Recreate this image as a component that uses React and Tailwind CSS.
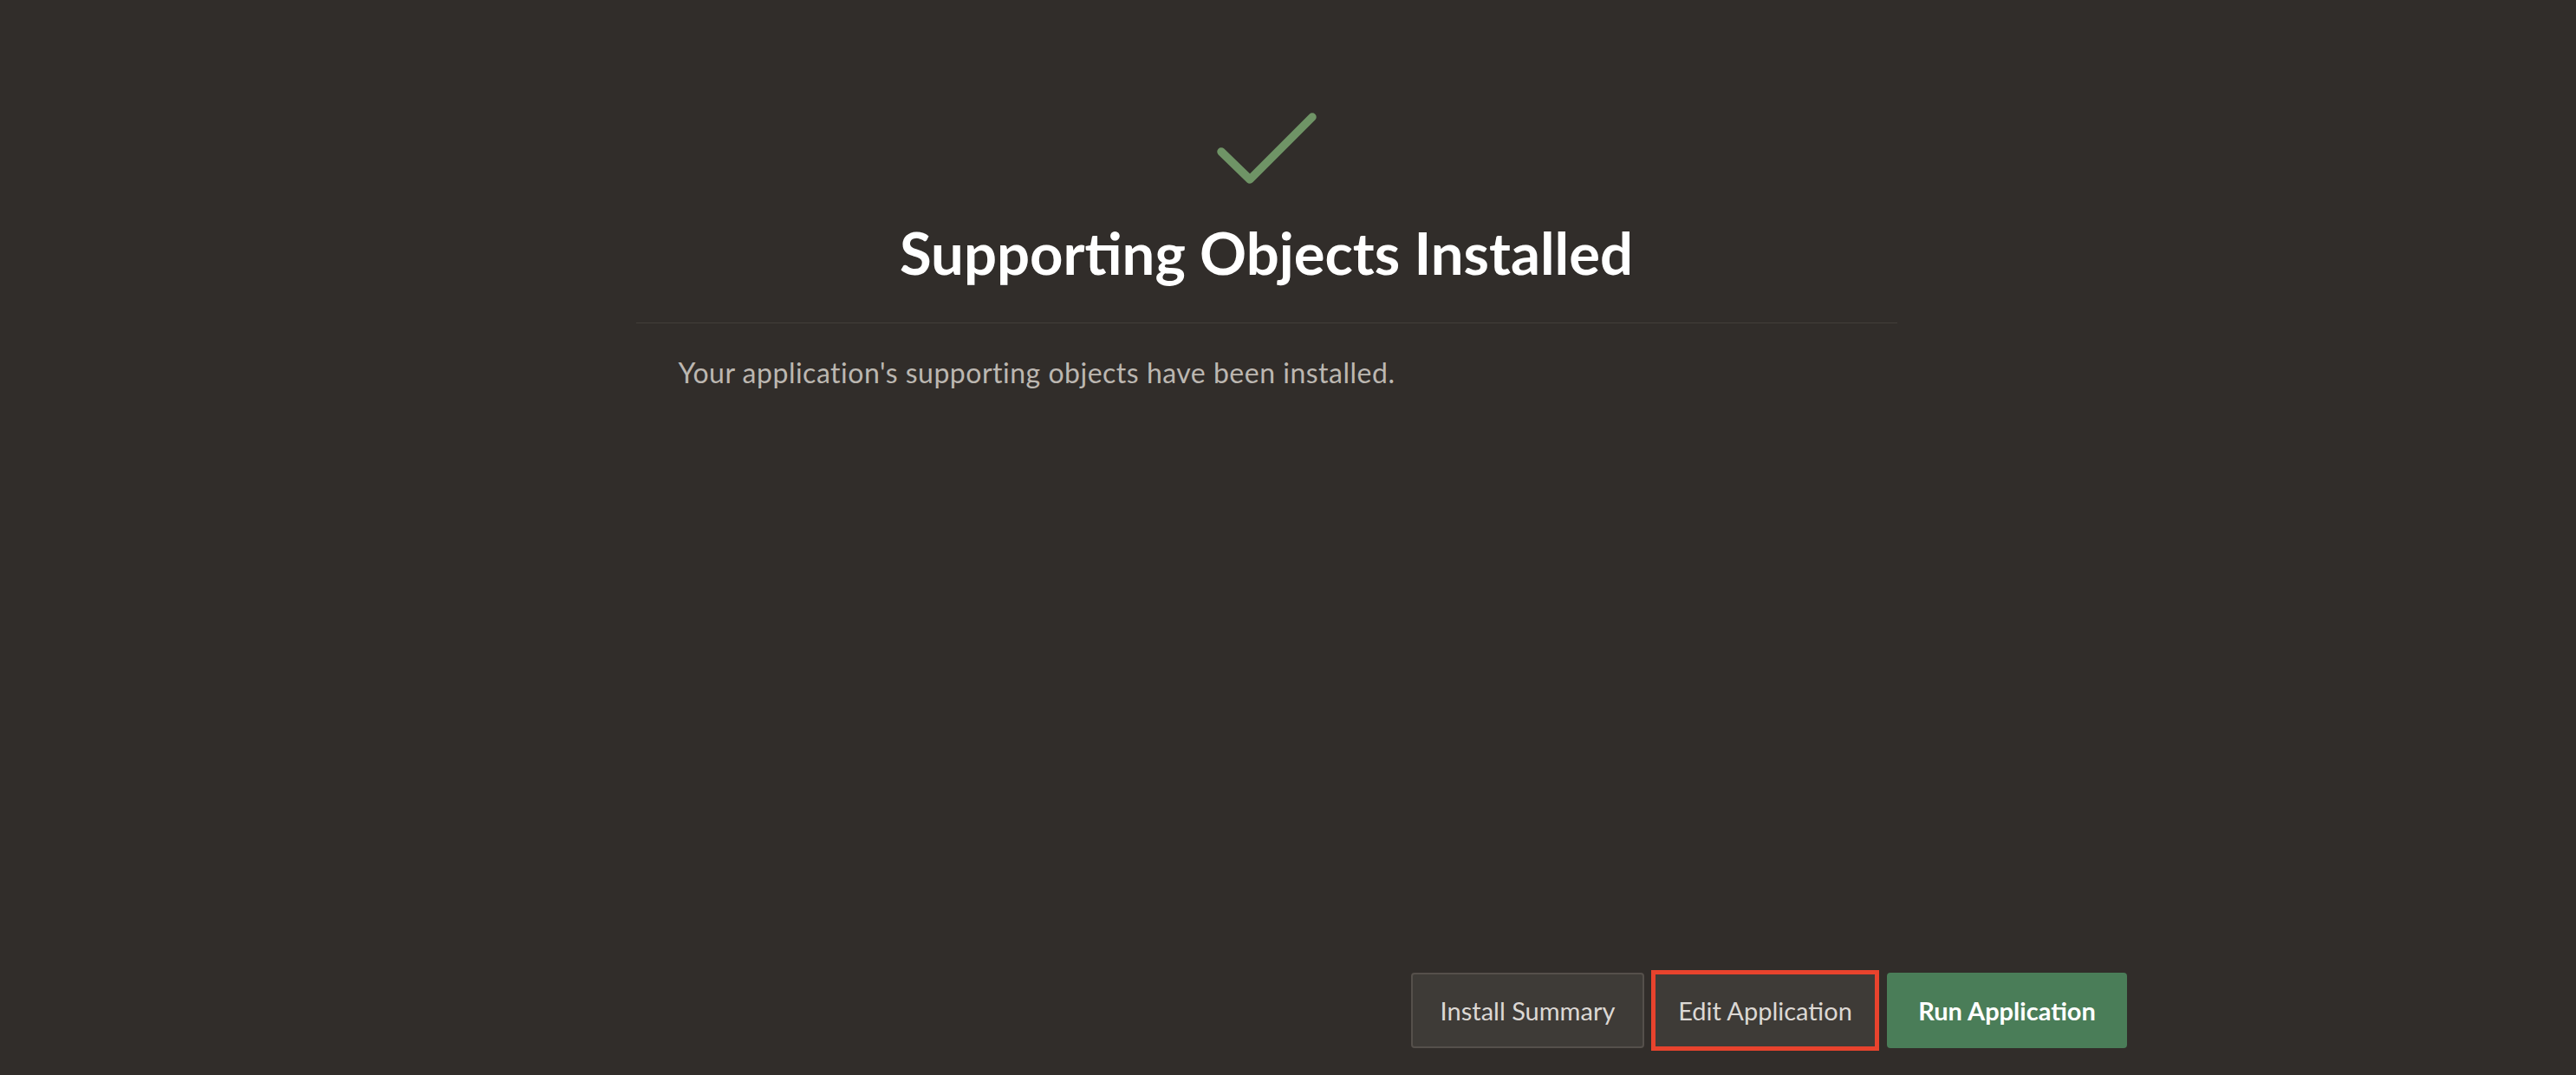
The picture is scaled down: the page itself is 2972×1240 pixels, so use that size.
export default function App() {
  return (
    <div className="w-full h-[1240px] bg-[#312d2a] flex flex-col [font-family:Lato,'Noto_Sans',sans-serif]">
      <div className="flex-1 pr-[50px]">
        <div className="w-[1455px] mx-auto flex flex-col">
          <div className="pt-[128px] flex justify-center">
            <svg width="120" height="90" viewBox="0 0 120 90" fill="none">
              <path d="M8 47 L41 79 L113 7" stroke="#6f9466" strokeWidth="9.5" strokeLinecap="round" strokeLinejoin="round" />
            </svg>
          </div>
          <h1 className="mt-[40px] text-[67px] leading-none font-bold text-white text-center">
            Supporting Objects Installed
          </h1>
          <div className="mt-[47px] h-px bg-[#433e3a]" />
          <p className="mt-[41px] px-[49px] text-[32px] leading-none tracking-[0.5px] text-[#bcb7b1]">
            Your application's supporting objects have been installed.
          </p>
        </div>
      </div>
      <div className="flex justify-end pr-[518px] pb-[31px]">
        <button className="w-[269px] h-[87px] rounded-[4px] border-2 border-[#55504b] bg-[#3e3b37] text-[29px] text-[#dcd8d4]">
          Install Summary
        </button>
        <button className="ml-[11px] w-[257px] h-[87px] bg-[#3e3b37] text-[29px] text-[#dcd8d4] outline-[5px] outline-solid outline-[#e8432d] outline-offset-[-2px]">
          Edit Application
        </button>
        <button className="ml-[12px] w-[277px] h-[87px] rounded-[4px] bg-[#4a7d58] text-[29px] font-bold text-white">
          Run Application
        </button>
      </div>
    </div>
  );
}
